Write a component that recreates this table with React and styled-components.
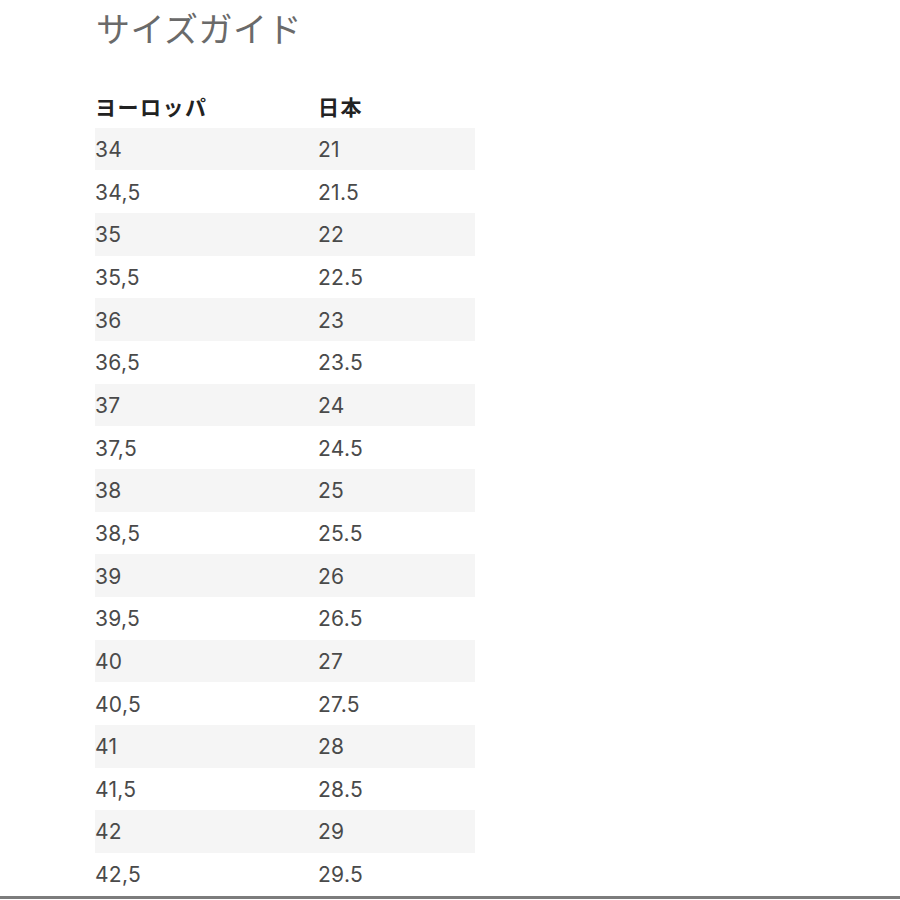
import React from "react";
import styled, { createGlobalStyle } from "styled-components";

const Global = createGlobalStyle`
  html, body { margin: 0; padding: 0; background: #ffffff; }
  body { font-family: Inter, "Noto Sans CJK JP", sans-serif; }
`;

const Page = styled.div`
  width: 900px;
  height: 900px;
  overflow: hidden;
  display: flex;
  flex-direction: column;
`;

const Content = styled.div`
  padding: 11px 0 0 95px;
  display: flex;
  flex-direction: column;
`;

const Title = styled.h1`
  margin: 0 0 40px 1px;
  font-family: "Noto Sans CJK JP", sans-serif;
  font-weight: 400;
  font-size: 34px;
  line-height: 34px;
  height: 34px;
  color: #6a6a6a;
  letter-spacing: 0.5px;
`;

const Table = styled.div`
  width: 380px;
  display: flex;
  flex-direction: column;
`;

const Row = styled.div`
  display: grid;
  grid-template-columns: 223px 157px;
  height: 42.67px;
  align-items: center;
  background: ${(p) => (p.$shaded ? "#f5f5f5" : "transparent")};
`;

const HeadCell = styled.div`
  font-family: "Noto Sans CJK JP", sans-serif;
  font-weight: 700;
  font-size: 21px;
  letter-spacing: 1.5px;
  color: #222222;
  line-height: 1;
`;

const Cell = styled.div`
  font-family: Inter, "Noto Sans", sans-serif;
  font-size: 21px;
  color: #4a4a4a;
  line-height: 1;
  letter-spacing: 0.3px;
  padding-top: 1px;
`;

const BottomRule = styled.div`
  margin-top: 1px;
  width: 900px;
  border-top: 3px solid #7c7c7c;
`;

const rows = [
  ["34", "21"],
  ["34,5", "21.5"],
  ["35", "22"],
  ["35,5", "22.5"],
  ["36", "23"],
  ["36,5", "23.5"],
  ["37", "24"],
  ["37,5", "24.5"],
  ["38", "25"],
  ["38,5", "25.5"],
  ["39", "26"],
  ["39,5", "26.5"],
  ["40", "27"],
  ["40,5", "27.5"],
  ["41", "28"],
  ["41,5", "28.5"],
  ["42", "29"],
  ["42,5", "29.5"],
];

export default function App() {
  return (
    <>
      <Global />
      <Page>
        <Content>
          <Title>サイズガイド</Title>
          <Table>
            <Row>
              <HeadCell>ヨーロッパ</HeadCell>
              <HeadCell>日本</HeadCell>
            </Row>
            {rows.map(([eu, jp], i) => (
              <Row key={eu} $shaded={i % 2 === 0}>
                <Cell>{eu}</Cell>
                <Cell>{jp}</Cell>
              </Row>
            ))}
          </Table>
        </Content>
        <BottomRule />
      </Page>
    </>
  );
}
